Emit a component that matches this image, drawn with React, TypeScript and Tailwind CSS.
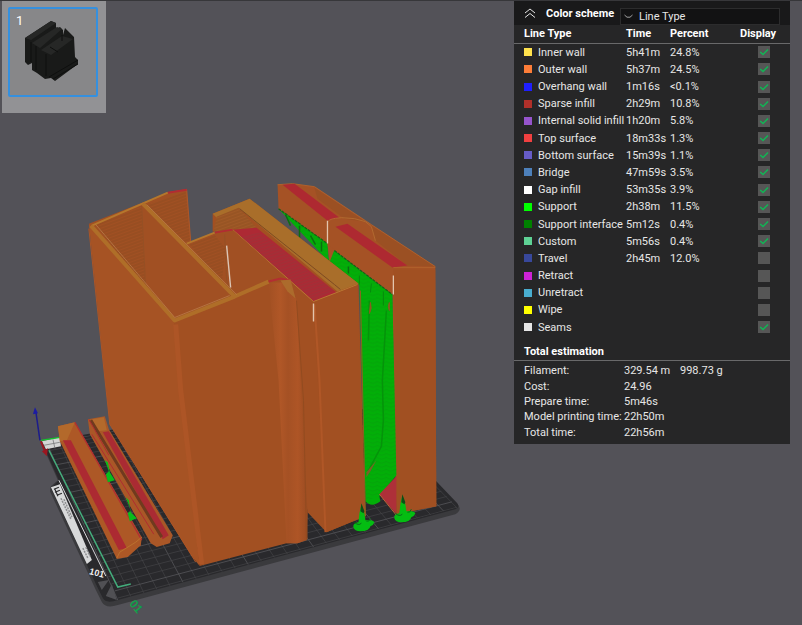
import React from "react";

type LineType = {
  name: string;
  swatch: string;
  time?: string;
  percent?: string;
  shown: boolean;
};

const lineTypes: LineType[] = [
  { name: "Inner wall", swatch: "bg-[#ffe24d]", time: "5h41m", percent: "24.8%", shown: true },
  { name: "Outer wall", swatch: "bg-[#fc7d38]", time: "5h37m", percent: "24.5%", shown: true },
  { name: "Overhang wall", swatch: "bg-[#1f1fff]", time: "1m16s", percent: "<0.1%", shown: true },
  { name: "Sparse infill", swatch: "bg-[#b0302a]", time: "2h29m", percent: "10.8%", shown: true },
  { name: "Internal solid infill", swatch: "bg-[#9654cc]", time: "1h20m", percent: "5.8%", shown: true },
  { name: "Top surface", swatch: "bg-[#f04040]", time: "18m33s", percent: "1.3%", shown: true },
  { name: "Bottom surface", swatch: "bg-[#665cc7]", time: "15m39s", percent: "1.1%", shown: true },
  { name: "Bridge", swatch: "bg-[#4d80ba]", time: "47m59s", percent: "3.5%", shown: true },
  { name: "Gap infill", swatch: "bg-[#ffffff]", time: "53m35s", percent: "3.9%", shown: true },
  { name: "Support", swatch: "bg-[#00ff00]", time: "2h38m", percent: "11.5%", shown: true },
  { name: "Support interface", swatch: "bg-[#008000]", time: "5m12s", percent: "0.4%", shown: true },
  { name: "Custom", swatch: "bg-[#5ed194]", time: "5m56s", percent: "0.4%", shown: true },
  { name: "Travel", swatch: "bg-[#38489b]", time: "2h45m", percent: "12.0%", shown: false },
  { name: "Retract", swatch: "bg-[#cd22d6]", shown: false },
  { name: "Unretract", swatch: "bg-[#49adcf]", shown: false },
  { name: "Wipe", swatch: "bg-[#ffff00]", shown: false },
  { name: "Seams", swatch: "bg-[#e6e6e6]", shown: true },
];

const totals: { label: string; value: string; extra?: string }[] = [
  { label: "Filament:", value: "329.54 m", extra: "998.73 g" },
  { label: "Cost:", value: "24.96" },
  { label: "Prepare time:", value: "5m46s" },
  { label: "Model printing time:", value: "22h50m" },
  { label: "Total time:", value: "22h56m" },
];

function gridLines() {
  const lines: React.ReactElement[] = [];
  for (let i = 0; i <= 26; i++) {
    const t = i / 26;
    lines.push(
      <line
        key={"v" + i}
        x1={47 + 295 * t}
        y1={443 - 53 * t}
        x2={118 + 340 * t}
        y2={600 - 92 * t}
        stroke={i % 5 === 0 ? "#5c5c60" : "#434347"}
      />,
    );
    const s = Math.pow(t, 1.2);
    lines.push(
      <line
        key={"h" + i}
        x1={47 + 71 * s}
        y1={443 + 155 * s}
        x2={342 + 116 * s}
        y2={390 + 117 * s}
        stroke={i % 5 === 0 ? "#5c5c60" : "#434347"}
      />,
    );
  }
  return lines;
}

function SupportTree({ x, y }: { x: number; y: number }) {
  return (
    <g transform={`translate(${x} ${y})`}>
      <path d="M-9 1Q-10 -3 -4 -4L-3 -13L-1 -22L2 -13L3 -6Q10 -7 12 -4Q11 -1 8 0Q7 5 -2 5Q-8 5 -9 1Z" fill="#04bd12" />
      <path d="M-2 -15L-1 -23L2 -15L1 -13Z" fill="#0b4f16" />
      <path d="M-8 -4Q-4 0 -1 -3M4 -5Q7 -4 8 -8" stroke="#0a6b18" fill="none" />
    </g>
  );
}

function Scene() {
  return (
    <svg
      className="absolute inset-0 h-full w-full"
      viewBox="0 0 802 625"
      preserveAspectRatio="xMinYMin meet"
      role="img"
      aria-label="Sliced model preview on build plate"
    >
      <defs>
        <clipPath id="plate">
          <path d="M46 443L342 390L459 507L116 601L104 590Z" />
        </clipPath>
        <pattern id="hatch" width="4" height="3" patternUnits="userSpaceOnUse" patternTransform="rotate(-20)">
          <path d="M0 1H4" stroke="#87491f" strokeWidth="0.7" />
        </pattern>
        <pattern id="hatchRed" width="4" height="3" patternUnits="userSpaceOnUse" patternTransform="rotate(-18)">
          <path d="M0 1H4" stroke="#96343a" strokeWidth="0.9" />
        </pattern>
        <pattern id="rings" width="9" height="4" patternUnits="userSpaceOnUse">
          <path d="M0 1Q4 5 9 1" stroke="#069c0c" strokeWidth="0.7" fill="none" />
        </pattern>
        <linearGradient id="column" x1="0" x2="1">
          <stop offset="0" stopColor="#a25023" />
          <stop offset="0.3" stopColor="#b05727" />
          <stop offset="0.5" stopColor="#a55124" />
          <stop offset="0.75" stopColor="#ae5526" />
          <stop offset="1" stopColor="#9b4c22" />
        </linearGradient>
      </defs>

      {/* build plate */}
      <path d="M42 444L342 390L437 484L459 505Q463 510 456 514L118 605Q106 609 102 602L96 590L50 491L51 486L58 480Z" fill="#3a3a3d" />
      <path d="M42 442L342 388L437 481L458 503Q461 507 456 509L118 600Q106 604 103 598L97 586L51 488L59 480Z" fill="#29292c" />
      <g clipPath="url(#plate)" strokeWidth="0.7">{gridLines()}</g>
      <path d="M42 441L60 437L61 446L46 449Z" fill="#d4d5d4" />
      <path d="M44 445L60 442M53 439L55 448" stroke="#77787a" strokeWidth="0.8" />
      <path d="M49 450L118 587L131 584" fill="none" stroke="#43ac7b" strokeWidth="1.5" />
      <path d="M59 480L106 576" stroke="#d8d8da" />
      <path d="M51 487L60 484L92 560L87 564Z" fill="#d8d9da" />
      <path d="M54 489L59 487M55 492L60 490M57 495L62 493M55 489L58 496" stroke="#29292c" strokeWidth="1.2" />
      <path d="M61 498L71 519M64 499L72 517M83 548L88 558M86 547L90 556" stroke="#8d8e90" strokeWidth="1.5" strokeDasharray="2 1" />
      <text x="89" y="574" transform="rotate(14 89 574)" fontSize="9" fontWeight="700" fill="#eeeeee" fontFamily="Liberation Sans, sans-serif">101</text>
      <path d="M98 582L109 580L102 590ZM112 584L117 600L106 596Z" fill="#505054" />
      <text x="129" y="604" transform="rotate(50 129 604)" fontSize="12" fontWeight="700" fill="#12a04a" fontFamily="Liberation Sans, sans-serif">01</text>

      {/* axes */}
      <path d="M41 440L60 437" stroke="#15c52e" strokeWidth="1.3" />
      <path d="M36 412L40 440" stroke="#1c1c8c" strokeWidth="1.5" />
      <path d="M35 407L38 413L33 414Z" fill="#1c1ca4" />
      <path d="M41 441L45 451" stroke="#9c1620" strokeWidth="2" />
      <path d="M42 451L48 448L47 456Z" fill="#9c1620" />

      {/* small rails */}
      <path d="M88 419L105 416L109 429L173 535L170 543L157 547L151 543L90 434Z" fill="#aa5727" />
      <path d="M92 419L104 417L107 430L98 431Z" fill="#b36a2c" />
      <path d="M103 432L109 431L169 535L163 539L152 520Z" fill="#aa2b33" />
      <path d="M91 420L154 524L162 537" stroke="#703a1e" strokeWidth="3" fill="none" />
      <path d="M92 434L154 534M89 419L109 455" stroke="#b02c30" fill="none" />
      <path d="M58 426L75 422L142 537L141 545L128 557L117 559L60 441Z" fill="#ad5826" />
      <path d="M58 426L75 422L67 440L60 441Z" fill="#b3692b" />
      <path d="M63 440L71 440L127 548L119 550Z" fill="#ac2a32" />
      <path d="M75 422L142 540" stroke="#b22e31" strokeWidth="1.3" />
      <path d="M117 558L120 552L136 542L142 537" stroke="#bb702e" fill="none" />
      <path d="M105 460L108 462L110 472L115 480L108 482L106 474L109 471Z" fill="#0abc1b" />
      <path d="M126 497L129 500L131 512L137 518L130 521L128 513L131 510Z" fill="#0abc1b" />

      {/* back right body and its supports */}
      <path d="M278 184L294 183L315 186L366 220L372 224L436 266L437 506L397 514L393 294L279 208Z" fill="#a55225" />
      <path d="M315 187L318 198L345 218L366 221ZM372 225L436 266L408 265L376 240Z" fill="#9b5023" />
      <path d="M278 184L293 183L315 186L366 220L372 224L436 266" fill="none" stroke="#b0602b" />
      <path d="M283 184L295 183L340 217L328 220Z" fill="#ae2931" />
      <path d="M336 226L348 223L408 265L393 267Z" fill="#ae2931" />
      <path d="M328 222Q328 218 342 217Q356 217 366 221L372 226L376 240" fill="none" stroke="#b2692f" />
      <path d="M394 267L436 267" stroke="#b0602b" />
      <path d="M394 269L436 269L437 506L397 514Z" fill="#a15022" />
      <path d="M279 208L328 243L329 258L335 250L393 294L397 475L380 496L381 501Q372 508 366 501L360 285L330 262Z" fill="#02af08" />
      <path d="M279 208L328 243L329 258L335 250L393 294L397 475L380 496L366 501L360 285L330 262Z" fill="url(#rings)" />
      <path d="M279 208L328 243M335 250L393 294" stroke="#176019" strokeWidth="1.2" strokeDasharray="3 1" />
      <path d="M286 214L291 225M300 225V238M311 235L316 244M322 241V251M349 266V273" stroke="#0b6e10" strokeWidth="1.5" />
      <path d="M360 275V284M372 283L371 292M384 291V305" stroke="#078a0d" />
      <path d="M328 243L335 249L330 262Z" fill="#a55225" />
      <path d="M370 300L369 340M387 310L383 380L384 420L382 446L367 474" stroke="#05930a" strokeWidth="1.5" fill="none" />
      <path d="M367 472L377 460L371 471L367 477Z" fill="#7a6226" />
      <path d="M371 302Q373 308 370 313ZM390 302Q388 306 390 310Z" fill="#8b5b20" stroke="#8b5b20" />
      <path d="M380 494L397 476V514Z" fill="#ae3039" />
      <path d="M380 494L397 515" stroke="#bd6336" />
      <path d="M328 220V243M394 275V294" stroke="#e3c5ad" strokeWidth="1.3" />

      {/* middle body */}
      <path d="M213 213L250 198L359 283L366 516L327 532L308 512L280 300L233 229L213 231Z" fill="#a25022" />
      <path d="M213 213L250 198L359 283L338 291L240 208L217 217Z" fill="#a96e2a" />
      <path d="M217 216L239 207L257 227L233 229L214 231Z" fill="#a15a27" />
      <path d="M217 216L239 207L257 227L233 229L214 231Z" fill="url(#hatch)" />
      <path d="M240 208L335 284L341 289" fill="none" stroke="#7d4a22" />
      <path d="M233 229L257 227L337 292L314 301Z" fill="#ad2934" />
      <path d="M260 232L334 290L314 300L240 236Z" fill="url(#hatchRed)" />
      <path d="M233 229L314 301L358 284" fill="none" stroke="#b97732" />
      <path d="M314 302L358 285L366 516L327 532Z" fill="#a25022" />
      <path d="M315 304L320 380L326 532" fill="none" stroke="#b05727" strokeWidth="2" />
      <path d="M314 303V321" stroke="#e3c5ad" strokeWidth="1.4" />
      <path d="M361 290L366 516" stroke="#8c6420" />

      {/* large box */}
      <path d="M89 223L168 192L187 189L191 241L215 232L233 229L296 286L235 300L175 322L92 230Z" fill="#a15023" />
      <path d="M96 224L142 205L146 290Z" fill="url(#hatch)" />
      <path d="M146 204L186 191L191 241L187 243Z" fill="url(#hatch)" />
      <path d="M190 244L215 234L226 248L222 284Z" fill="url(#hatch)" />
      <path d="M142 206L146 290M225 234L227 280L233 295" stroke="#965025" fill="none" />
      <path d="M168 192L187 189L191 241" fill="none" stroke="#b05727" />
      <path d="M168 192L187 189M215 232L233 229" fill="none" stroke="#b22c32" strokeWidth="2" />
      <path d="M92 225L168 192M187 243L215 232" stroke="#b5772c" strokeWidth="2" fill="none" />
      <path d="M227 245L231 287" stroke="#dbc5b5" strokeWidth="1.4" />
      <path d="M89 223L175 321L200 566L192 556L110 424Z" fill="#a65324" />
      <path d="M174 320L235 297L269 281L290 285L296 297L308 512L307 540L298 543L287 543L200 566Z" fill="#a25022" />
      <path d="M269 282L290 282L297 300L308 512L308 539L298 543L287 543L279 380Z" fill="url(#column)" />
      <path d="M297 300L304 400L307 540" stroke="#934b20" fill="none" />
      <path d="M91 225L175 320L235 296L269 281" fill="none" stroke="#af6e28" strokeWidth="4" strokeLinejoin="round" />
      <path d="M143 203L235 296" stroke="#af6e28" strokeWidth="4" />
      <path d="M96 224L175 317L230 295M147 204L237 294" stroke="#c28b55" strokeWidth="0.6" fill="none" />
      <path d="M269 281L281 278L291 280" stroke="#b32e32" strokeWidth="2" fill="none" />
      <path d="M281 280L291 279L296 298L288 291Z" fill="#ac6b2c" />
      <path d="M176 324L181 390L202 564" stroke="#ad5526" strokeWidth="5" fill="none" />
      <path d="M89 228L110 424L196 562" stroke="#ad5526" fill="none" />

      <SupportTree x={363} y={526} />
      <SupportTree x={404} y={517} />
    </svg>
  );
}

function PlateThumbnail() {
  return (
    <button
      type="button"
      aria-label="Plate 1"
      className="relative mt-px ml-0.5 h-28 w-26 shrink-0 bg-[#929295] pt-1.5 pr-2 pb-4 pl-1.5"
    >
      <span className="block h-full rounded-xs border-2 border-[#3590df] bg-[#878789]">
        <svg viewBox="10 9 86 86" className="h-full w-full" aria-hidden="true">
          <path d="M25 38L51 21L56 23V29L60 27L63 30V35L65 28L74 37L75 57L78 60V64L55 81L51 78L45 79L37 73L32 70V63L28 65L25 62Z" fill="#191a19" />
          <path d="M25 38L51 21L56 23L31 40ZM32 43L57 27L62 29L40 48ZM41 50L62 36L73 39L51 55Z" fill="#262726" />
          <path d="M31 42V62M36 46V70M46 54V76M50 47L58 52M62 35V41M49 77L78 60M53 79L78 64" stroke="#0e0f0e" fill="none" />
        </svg>
      </span>
      <span className="absolute top-3 left-3.5 text-[13px] leading-4 text-white">1</span>
    </button>
  );
}

function DisplayToggle({ name, shown }: { name: string; shown: boolean }) {
  return (
    <label className="relative mx-auto block h-3 w-3">
      <input
        type="checkbox"
        defaultChecked={shown}
        aria-label={"Display " + name}
        className="peer block h-3 w-3 appearance-none bg-[#565656]"
      />
      <svg viewBox="0 0 12 12" className="pointer-events-none absolute inset-0 hidden h-3 w-3 peer-checked:block" aria-hidden="true">
        <path d="M2.200 6L5 8.500L10 3.500" fill="none" stroke="#12b455" strokeWidth="1.6" />
      </svg>
    </label>
  );
}

function LegendPanel() {
  return (
    <aside className="mt-px mr-3 w-[276px] shrink-0 bg-[#262627] text-[11px] leading-[15px] text-[#e6e6e6]">
      <header className="flex h-6 items-center bg-[#19191a] px-2.5">
        <button type="button" aria-label="Collapse legend" className="h-3 w-3">
          <svg viewBox="0 0 12 12" className="h-3 w-3" fill="none" stroke="#e6e6e6" aria-hidden="true">
            <path d="M1 6L6 2L11 6M1 10.500L6 6.500L11 10.500" />
          </svg>
        </button>
        <label htmlFor="scheme" className="ml-2.5 flex-1 font-bold text-white">
          Color scheme
        </label>
        <div className="relative mt-1.5 w-40">
          <select
            id="scheme"
            className="block h-[17px] w-full appearance-none border border-[#2c2c2d] bg-[#121213] pl-[18px] text-[11px] leading-[15px] text-[#e6e6e6]"
          >
            <option>Line Type</option>
          </select>
          <svg viewBox="0 0 9 5" className="pointer-events-none absolute top-1.5 left-1 h-[5px] w-[9px]" fill="none" stroke="#a0a0a0" aria-hidden="true">
            <path d="M0.500 1L3 3.200H6L8.500 1" />
          </svg>
        </div>
      </header>

      <table className="h-[311px] w-full table-fixed border-collapse whitespace-nowrap">
        <colgroup>
          <col className="w-[112px]" />
          <col className="w-11" />
          <col className="w-[68px]" />
          <col />
        </colgroup>
        <thead>
          <tr className="h-[18px] border-b border-[#69696a] text-left text-white">
            <th className="p-0 pl-2.5">Line Type</th>
            <th className="p-0">Time</th>
            <th className="p-0">Percent</th>
            <th className="p-0 pl-0.5">Display</th>
          </tr>
        </thead>
        <tbody>
          {lineTypes.map((row) => (
            <tr key={row.name}>
              <td className="p-0 pl-2.5">
                <span className="flex items-center gap-1.5">
                  <span className={"h-2 w-2 " + row.swatch} />
                  {row.name}
                </span>
              </td>
              <td className="p-0">{row.time}</td>
              <td className="p-0">{row.percent}</td>
              <td className="p-0">
                <DisplayToggle name={row.name} shown={row.shown} />
              </td>
            </tr>
          ))}
        </tbody>
      </table>

      <h2 className="mt-2 border-b border-[#69696a] pb-px pl-2.5 text-[11px] leading-[15px] font-bold text-white">
        Total estimation
      </h2>
      <table className="mt-0.5 mb-1 h-[77px] w-full table-fixed border-collapse whitespace-nowrap">
        <tbody>
          {totals.map((row) => (
            <tr key={row.label}>
              <th className="w-[110px] p-0 pl-2.5 text-left font-normal">{row.label}</th>
              <td className="w-14 p-0">{row.value}</td>
              <td className="p-0">{row.extra}</td>
            </tr>
          ))}
        </tbody>
      </table>
    </aside>
  );
}

export default function App() {
  return (
    <main className="relative min-h-screen overflow-hidden border-t border-[#37373a] bg-[#535258] font-[Roboto,'Liberation_Sans',sans-serif]">
      <Scene />
      <div className="relative -mt-px flex items-start justify-between">
        <PlateThumbnail />
        <LegendPanel />
      </div>
    </main>
  );
}
